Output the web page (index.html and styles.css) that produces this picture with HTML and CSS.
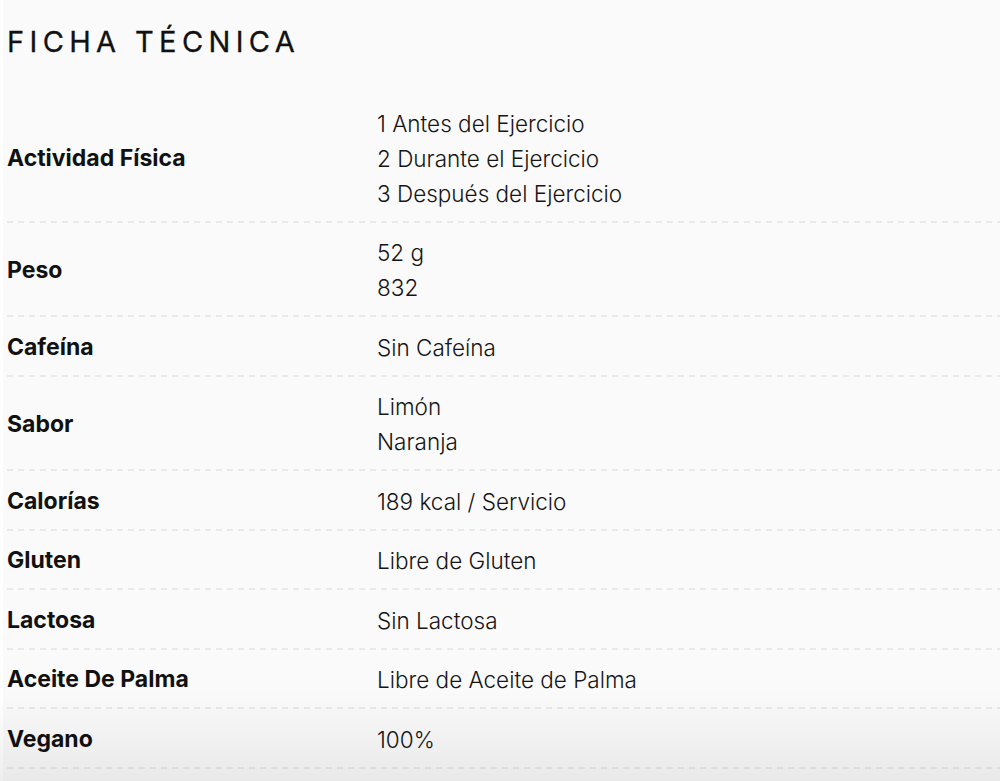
FILE: index.html
```html
<!DOCTYPE html>
<html lang="es">
<head>
<meta charset="utf-8">
<title>Ficha Técnica</title>
<link rel="stylesheet" href="styles.css">
</head>
<body>
<main class="page">
  <h2 class="title">FICHA TÉCNICA</h2>
  <div class="specs">
    <div class="row">
      <div class="label">Actividad Física</div>
      <div class="value"><span>1 Antes del Ejercicio</span><span>2 Durante el Ejercicio</span><span>3 Después del Ejercicio</span></div>
    </div>
    <div class="row">
      <div class="label">Peso</div>
      <div class="value"><span>52 g</span><span>832</span></div>
    </div>
    <div class="row">
      <div class="label">Cafeína</div>
      <div class="value"><span>Sin Cafeína</span></div>
    </div>
    <div class="row">
      <div class="label">Sabor</div>
      <div class="value"><span>Limón</span><span>Naranja</span></div>
    </div>
    <div class="row">
      <div class="label">Calorías</div>
      <div class="value"><span>189 kcal / Servicio</span></div>
    </div>
    <div class="row">
      <div class="label">Gluten</div>
      <div class="value"><span>Libre de Gluten</span></div>
    </div>
    <div class="row">
      <div class="label">Lactosa</div>
      <div class="value"><span>Sin Lactosa</span></div>
    </div>
    <div class="row">
      <div class="label">Aceite De Palma</div>
      <div class="value"><span>Libre de Aceite de Palma</span></div>
    </div>
    <div class="row">
      <div class="label">Vegano</div>
      <div class="value"><span>100%</span></div>
    </div>
  </div>
</main>
<div class="fade"></div>
</body>
</html>
```

FILE: styles.css
```css
html, body {
  margin: 0;
  padding: 0;
  background: #ffffff;
}
body {
  font-family: "Inter", "Noto Sans", sans-serif;
  color: #151515;
}
.page {
  margin-left: 3px;
  background: #fafafa;
  padding: 0 0 40px 4px;
  min-height: 781px;
  box-sizing: border-box;
}
.title {
  margin: 0;
  padding-top: 25px;
  font-size: 29px;
  line-height: 34px;
  font-weight: 400;
  letter-spacing: 0.185em;
  color: #111111;
  padding-bottom: 34px;
  -webkit-text-stroke: 0.3px #111111;
}
.specs {
  display: flex;
  flex-direction: column;
}
.row {
  display: grid;
  grid-template-columns: 370px 1fr;
  align-items: center;
  padding: 12.5px 0 12px;
  background-image: linear-gradient(to right, #e9e9e9 6px, transparent 6px);
  background-size: 11px 2px;
  background-repeat: repeat-x;
  background-position: 0 100%;
}
.label {
  font-size: 23px;
  font-weight: 700;
  line-height: 35px;
  letter-spacing: 0;
  color: #111111;
}
.value {
  display: flex;
  flex-direction: column;
  font-size: 22.5px;
  font-weight: 300;
  line-height: 35px;
  letter-spacing: 0;
  color: #151515;
}
.fade {
  position: fixed;
  left: 0;
  right: 0;
  bottom: 0;
  height: 90px;
  background: linear-gradient(to bottom, rgba(0,0,0,0), rgba(0,0,0,0.065));
  pointer-events: none;
}
```
